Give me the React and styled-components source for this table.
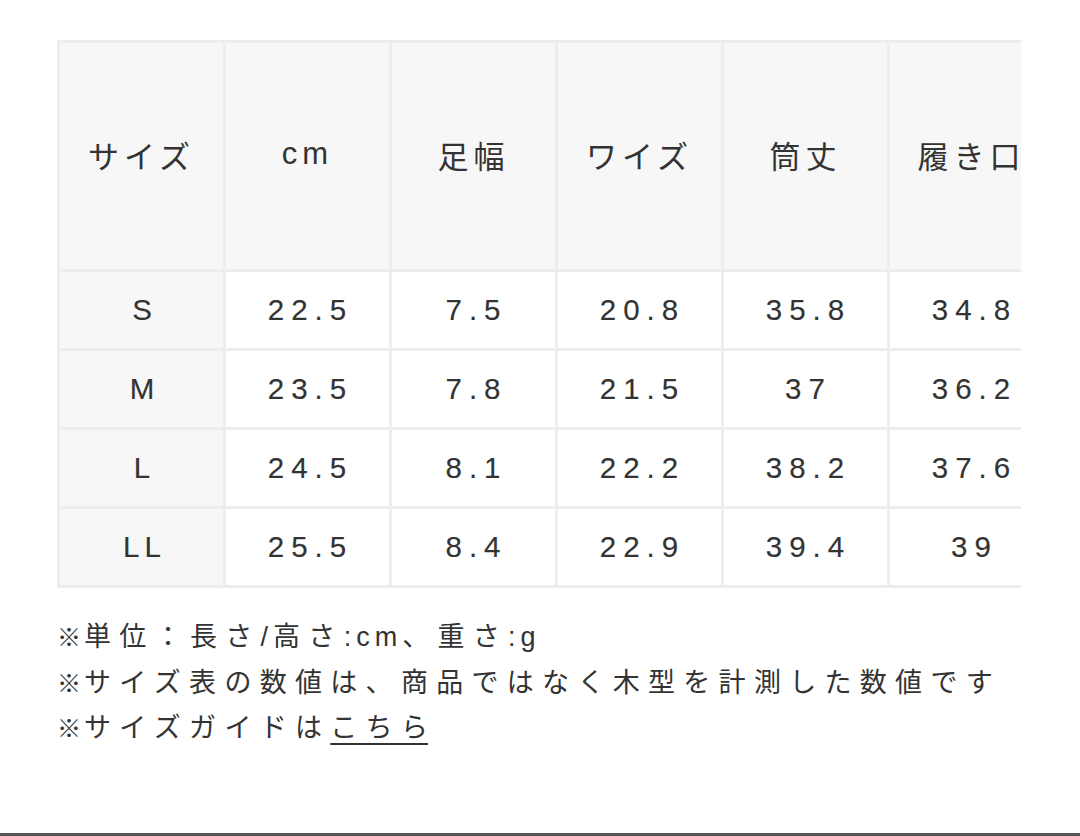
import React from 'react';
import styled, { createGlobalStyle } from 'styled-components';

const GlobalStyle = createGlobalStyle`
    html, body {
        margin: 0;
        padding: 0;
        background: #fff;
    }
    body {
        font-family: 'Liberation Sans', 'Noto Sans CJK JP', sans-serif;
        color: #333;
    }
`;

const Page = styled.div`
    width: 1080px;
    height: 836px;
    box-sizing: border-box;
    padding: 40px 0 0 57px;
    border-bottom: 3px solid #555;
    display: flex;
    flex-direction: column;
`;

const TableClip = styled.div`
    width: 964px;
    overflow: hidden;
`;

const SizeTable = styled.table`
    width: ${props => props.cols * 166}px;
    table-layout: fixed;
    border-collapse: collapse;
`;

const HeadCell = styled.th`
    height: 229px;
    width: 166px;
    box-sizing: border-box;
    background: #f7f7f7;
    border: 3px solid #ededed;
    font-weight: 400;
    font-size: 31px;
    letter-spacing: 5px;
    padding: 0 0 4px 0;
    text-align: center;
    white-space: nowrap;
    overflow: hidden;
    color: #333;
`;

const Cell = styled.td`
    height: 79px;
    box-sizing: border-box;
    background: ${props => props.label ? '#f7f7f7' : '#fff'};
    border: 3px solid #ededed;
    font-size: 29.5px;
    letter-spacing: ${props => props.label ? '5px' : '7px'};
    padding: 0 0 0 6px;
    text-align: center;
    white-space: nowrap;
    color: #333;
    -webkit-text-stroke: 0.15px #333;
`;

const Notes = styled.div`
    margin-top: 27px;
    font-size: 27px;
    line-height: 44.5px;
    letter-spacing: 8.3px;
    color: #333;
`;

const NoteLine = styled.p`
    margin: 0;
    white-space: nowrap;
`;

const Mark = styled.span`
    font-size: 24px;
    letter-spacing: 3px;
`;

// latin bits of the notes sit tighter than the kana around them
const Latin = styled.span`
    letter-spacing: 5px;
`;

const GuideLink = styled.a`
    color: #333;
    text-decoration: underline;
    text-decoration-thickness: 2px;
    text-underline-offset: 6px;
`;

// no trailing gap, so the underline stops at the last glyph
const LastChar = styled.span`
    letter-spacing: 0;
`;

const headers = ['サイズ', 'cm', '足幅', 'ワイズ', '筒丈', '履き口']

const rows = [
    ['S', '22.5', '7.5', '20.8', '35.8', '34.8'],
    ['M', '23.5', '7.8', '21.5', '37', '36.2'],
    ['L', '24.5', '8.1', '22.2', '38.2', '37.6'],
    ['LL', '25.5', '8.4', '22.9', '39.4', '39'],
]

const App = () => {
    return (
        <Page>
            <GlobalStyle />
            <TableClip>
                <SizeTable cols={headers.length}>
                    <thead>
                        <tr>
                            {headers.map((h, i) => <HeadCell key={i}>{h}</HeadCell>)}
                        </tr>
                    </thead>
                    <tbody>
                        {rows.map((row, i) => (
                            <tr key={i}>
                                {row.map((v, j) => <Cell key={j} label={j === 0}>{v}</Cell>)}
                            </tr>
                        ))}
                    </tbody>
                </SizeTable>
            </TableClip>
            <Notes>
                <NoteLine><Mark>※</Mark>単位：長さ<Latin>/</Latin>高さ<Latin>:cm</Latin>、重さ<Latin>:g</Latin></NoteLine>
                <NoteLine><Mark>※</Mark>サイズ表の数値は、商品ではなく木型を計測した数値です</NoteLine>
                <NoteLine><Mark>※</Mark>サイズガイドは<GuideLink href="#">こち<LastChar>ら</LastChar></GuideLink></NoteLine>
            </Notes>
        </Page>
    )
}

export default App
